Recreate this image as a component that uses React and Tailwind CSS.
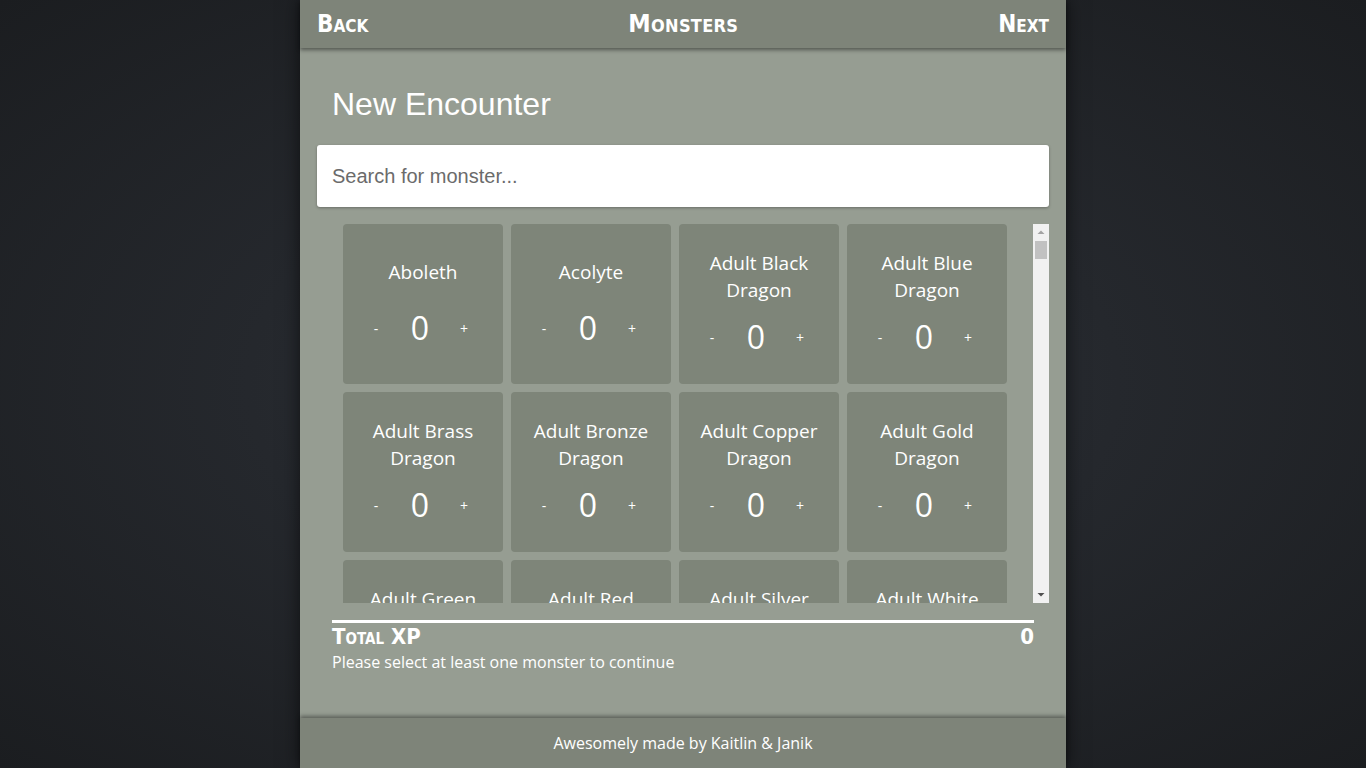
import React, { useState } from 'react';

const MONSTERS = [
    'Aboleth', 'Acolyte', 'Adult Black Dragon', 'Adult Blue Dragon',
    'Adult Brass Dragon', 'Adult Bronze Dragon', 'Adult Copper Dragon', 'Adult Gold Dragon',
    'Adult Green Dragon', 'Adult Red Dragon', 'Adult Silver Dragon', 'Adult White Dragon',
    'Air Elemental', 'Allosaurus', 'Ancient Black Dragon', 'Ancient Blue Dragon',
    'Ancient Brass Dragon', 'Ancient Bronze Dragon', 'Ancient Copper Dragon', 'Ancient Gold Dragon',
];

const scFont = "font-['Liberation_Sans_Narrow','DejaVu_Sans_Condensed','Liberation_Sans',sans-serif] font-bold [font-variant:small-caps]";
const bodyFont = "font-['Open_Sans','Liberation_Sans',sans-serif]";

function MonsterCard({ name, count, onChange }) {
    return (
        <div className="w-[160px] h-[160px] rounded-[4px] bg-[#7e8579] flex flex-col items-center justify-center text-white">
            <p className={`${bodyFont} min-h-[36px] text-[19px] leading-[27px] text-center px-3`}>{name}</p>
            <div className="flex items-center justify-center mt-[12px] pr-[6px]">
                <button onClick={() => onChange(-1)} className={`${bodyFont} w-[30px] text-[14px] cursor-pointer`}>-</button>
                <span className={`${bodyFont} w-[58px] text-center text-[32px] leading-[42px]`}>{count}</span>
                <button onClick={() => onChange(1)} className={`${bodyFont} w-[30px] text-[14px] cursor-pointer`}>+</button>
            </div>
        </div>
    );
}

export default function App() {
    const [counts, setCounts] = useState({});

    const handleChange = (name, delta) => {
        setCounts(prev => ({ ...prev, [name]: Math.max(0, (prev[name] || 0) + delta) }));
    };

    return (
        <div className="min-h-screen bg-[radial-gradient(ellipse_at_center,#2f333a_0%,#25282d_45%,#1b1d20_100%)] flex justify-center">
            <div className="w-[766px] h-screen flex flex-col bg-[#969d92] shadow-[0_0_18px_rgba(0,0,0,0.6)]">
                <header className="relative z-10 h-[48px] shrink-0 bg-[#7e8479] shadow-[0_2px_4px_rgba(0,0,0,0.45)] flex items-center justify-between px-[17px] text-white">
                    <span className={`${scFont} text-[24px] cursor-pointer`}>Back</span>
                    <span className={`${scFont} text-[25px] tracking-[0.3px]`}>Monsters</span>
                    <span className={`${scFont} text-[24px] cursor-pointer`}>Next</span>
                </header>

                <main className="flex-1 flex flex-col px-[17px] pt-[38px] min-h-0">
                    <h1 className="font-['Liberation_Sans',Arial,sans-serif] text-[32px] leading-[36px] text-white px-[15px]">New Encounter</h1>
                    <input
                        className="mt-[23px] h-[62px] w-full rounded-[3px] bg-white px-[15px] text-[20px] font-['Liberation_Sans',Arial,sans-serif] text-[#333] placeholder:text-[#6b6b6b] shadow-[0_1px_3px_rgba(0,0,0,0.3)] outline-none"
                        placeholder="Search for monster..."
                    />
                    <div className="mt-[17px] h-[379px] flex">
                        <div className="flex-1 overflow-y-auto [scrollbar-width:none]">
                            <div className="flex flex-wrap justify-center gap-[8px]">
                                {MONSTERS.map(name => (
                                    <MonsterCard
                                        key={name}
                                        name={name}
                                        count={counts[name] || 0}
                                        onChange={(d) => handleChange(name, d)}
                                    />
                                ))}
                            </div>
                        </div>
                        {/* scrollbar track */}
                        <div className="w-[16px] shrink-0 bg-[#f1f1f1] flex flex-col items-center">
                            <svg width="16" height="16" viewBox="0 0 16 16" className="shrink-0"><path d="M4.5 10 L8 6.5 L11.5 10 Z" fill="#a3a3a3" /></svg>
                            <div className="w-[12px] h-[18px] bg-[#c1c1c1] mt-[1px]" />
                            <div className="flex-1" />
                            <svg width="16" height="16" viewBox="0 0 16 16" className="shrink-0"><path d="M4.5 6 L8 9.5 L11.5 6 Z" fill="#505050" /></svg>
                        </div>
                    </div>
                    <div className="mx-[15px] mt-[17px] border-t-[3px] border-white">
                        <div className="flex items-center justify-between text-white">
                            <span className={`${scFont} text-[22px] leading-[28px]`}>Total XP</span>
                            <span className={`${scFont} text-[22px] leading-[28px]`}>0</span>
                        </div>
                        <p className={`${bodyFont} text-[16px] leading-[22px] text-white`}>Please select at least one monster to continue</p>
                    </div>
                </main>

                <footer className="h-[50px] shrink-0 bg-[#7e8479] shadow-[0_-2px_4px_rgba(0,0,0,0.4)] flex items-center justify-center">
                    <p className={`${bodyFont} text-[16px] text-white`}>Awesomely made by Kaitlin &amp; Janik</p>
                </footer>
            </div>
        </div>
    );
}
